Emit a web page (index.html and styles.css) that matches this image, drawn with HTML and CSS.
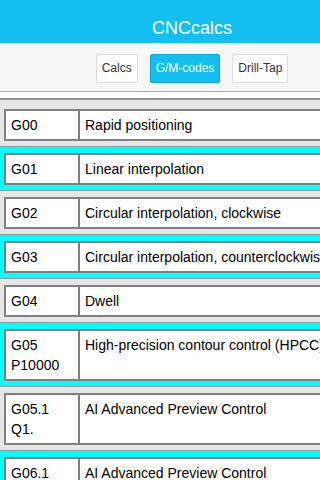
FILE: index.html
```html
<!DOCTYPE html>
<html lang="en">
<head>
  <meta charset="UTF-8">
  <meta name="viewport" content="width=device-width, initial-scale=1.0">
  <title>CNCcalcs - G/M-codes</title>
  <link rel="stylesheet" href="styles.css">
</head>
<body>
  <div class="page">
    <header class="topbar">CNCcalcs</header>

    <nav class="tabs">
      <a class="tab" href="#">Calcs</a>
      <a class="tab active" href="#">G/M-codes</a>
      <a class="tab" href="#">Drill-Tap</a>
    </nav>

    <div class="codes">
      <div class="row">
        <div class="code">G00</div>
        <div class="desc">Rapid positioning</div>
      </div>
      <div class="row">
        <div class="code">G01</div>
        <div class="desc">Linear interpolation</div>
      </div>
      <div class="row">
        <div class="code">G02</div>
        <div class="desc">Circular interpolation, clockwise</div>
      </div>
      <div class="row">
        <div class="code">G03</div>
        <div class="desc">Circular interpolation, counterclockwise</div>
      </div>
      <div class="row">
        <div class="code">G04</div>
        <div class="desc">Dwell</div>
      </div>
      <div class="row">
        <div class="code">G05 P10000</div>
        <div class="desc">High-precision contour control (HPCC)</div>
      </div>
      <div class="row">
        <div class="code">G05.1 Q1.</div>
        <div class="desc">AI Advanced Preview Control</div>
      </div>
      <div class="row">
        <div class="code">G06.1</div>
        <div class="desc">AI Advanced Preview Control</div>
      </div>
    </div>
  </div>
</body>
</html>
```

FILE: styles.css
```css
html { overflow: hidden; }
body { margin: 0; background: #fff; font-family: "Liberation Sans", Arial, sans-serif; color: #000; }
.page { width: 384px; }

.topbar { background: #12bff0; color: #fff; text-align: center; font-size: 18px; line-height: 21px; padding: 18px 0 4px; }

.tabs { display: flex; justify-content: center; gap: 12px; background: #f7f7f7; padding: 11px 0 8px; border-bottom: 1px solid #aaa; }
.tab { display: block; font-size: 12px; line-height: 27px; padding: 0 5px; color: #333; text-decoration: none; background: #fff; border: 1px solid #ddd; border-radius: 2px; }
.tab.active { background: #12bff0; border-color: #0ea6d4; color: #fff; }

.codes { margin-top: 6px; border-top: 1px solid #888; }
.row { display: flex; padding: 6px 0 5px 4px; border-top: 1px solid #999; background: #e6e6e6; font-size: 14px; line-height: 20px; }
.row:first-child { padding-top: 9px; }
.row:nth-child(even) { background: #00ffff; }
.code, .desc { background: #fff; border: 2px solid #808080; padding: 4px 5px; }
.code { width: 76px; box-sizing: border-box; flex: none; }
.desc { flex: 1; border-left: 0; white-space: nowrap; }
```
